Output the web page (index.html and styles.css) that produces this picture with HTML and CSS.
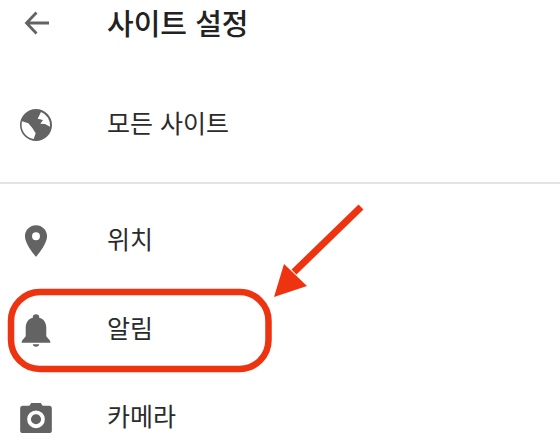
FILE: index.html
```html
<!DOCTYPE html>
<html lang="ko">
<head>
<meta charset="utf-8">
<title>사이트 설정</title>
<link rel="stylesheet" href="styles.css">
</head>
<body>
<div class="page">
  <header class="header">
    <svg class="icon-back" viewBox="0 0 26 26"><path d="M25 13H3M12.5 2.500L2.500 13l10 10.500" fill="none" stroke="#636363" stroke-width="2.800"/></svg>
    <h1 class="title">사이트 설정</h1>
  </header>
  <section class="section-top">
    <div class="row">
      <span class="icon-cell">
        <svg class="icon" viewBox="18 18 114 114"><path fill="#636363" fill-rule="evenodd" d="M75 27a48 48 0 1 0 0 96 48 48 0 0 0 0-96zM33 64L52 70L64 84L74 100L68 117A43 43 0 0 1 33 64zM90 36A43 43 0 0 1 117 80L102 72L88 71L96 60L80 56z"/></svg>
      </span>
      <span class="label">모든 사이트</span>
    </div>
  </section>
  <section class="section-list">
    <div class="row row-list">
      <span class="icon-cell">
        <svg class="icon" viewBox="0 0 24 24"><path fill="#636363" d="M12 2C8.100 2 5 5.100 5 9c0 5.200 7 13 7 13s7-7.800 7-13c0-3.900-3.100-7-7-7zm0 9.500a2.500 2.500 0 1 1 0-5 2.500 2.500 0 0 1 0 5z"/></svg>
      </span>
      <span class="label">위치</span>
    </div>
    <div class="row row-list">
      <span class="icon-cell">
        <svg class="icon" viewBox="0 0 24 24"><path fill="#636363" d="M12 22.500c1.100 0 2-.6 2-1.500h-4c0 .9.900 1.500 2 1.500zm6.500-6.500v-5.500c0-3.100-1.600-5.600-4.500-6.300V3.500c0-.8-.7-1.500-2-1.500s-2 .7-2 1.500v.7c-2.900.7-4.500 3.200-4.500 6.300V16L3 19v1h18v-1l-2.500-3z"/></svg>
      </span>
      <span class="label">알림</span>
    </div>
    <div class="row row-list">
      <span class="icon-cell">
        <svg class="icon" viewBox="0 0 24 24"><path fill="#636363" fill-rule="evenodd" d="M9 2.500L7.800 4.300H3.500C2.700 4.300 2 5 2 5.800v14.200c0 .8.700 1.500 1.500 1.500h17c.8 0 1.500-.7 1.500-1.500V5.800c0-.8-.7-1.500-1.500-1.500h-4.300L15 2.500H9zM12 7.200a5.600 5.600 0 1 1 0 11.200 5.600 5.600 0 0 1 0-11.200z"/><circle cx="12" cy="12.800" r="3.200" fill="#636363"/></svg>
      </span>
      <span class="label">카메라</span>
    </div>
  </section>
  <svg class="markup" viewBox="0 0 560 448">
    <rect x="11" y="292" width="257.500" height="77" rx="29" fill="none" stroke="#ee3311" stroke-width="6.500"/>
    <path d="M361 207L294 272" fill="none" stroke="#ee3311" stroke-width="7"/>
    <path d="M274 297L284 264L307 286Z" fill="#ee3311"/>
  </svg>
</div>
</body>
</html>
```

FILE: styles.css
```css
* { box-sizing: border-box; }
html, body { margin: 0; padding: 0; background: #fff; }
body { font-family: "Noto Sans CJK KR", "Noto Sans", sans-serif; color: #2b2b2b; }
.page { position: relative; width: 560px; height: 448px; overflow: hidden; }
.header { display: flex; align-items: center; height: 46px; margin-bottom: 34px; padding-left: 24px; }
.icon-back { width: 26px; height: 26px; margin-right: 57px; }
.title { margin: 0 0 2px; font-size: 29px; font-weight: 500; line-height: 44px; color: #222; }
.section-top { padding-bottom: 13px; border-bottom: 2px solid #e4e4e4; }
.section-list { padding-top: 12.750px; }
.row { display: flex; align-items: center; height: 89px; }
.row-list { height: 88.500px; }
.icon-cell { display: flex; justify-content: center; width: 72px; margin-right: 35px; }
.icon { width: 38px; height: 38px; }
.label { font-size: 25px; line-height: 36px; margin-bottom: 6px; }
.markup { position: absolute; left: 0; top: 0; width: 560px; height: 448px; }
```
